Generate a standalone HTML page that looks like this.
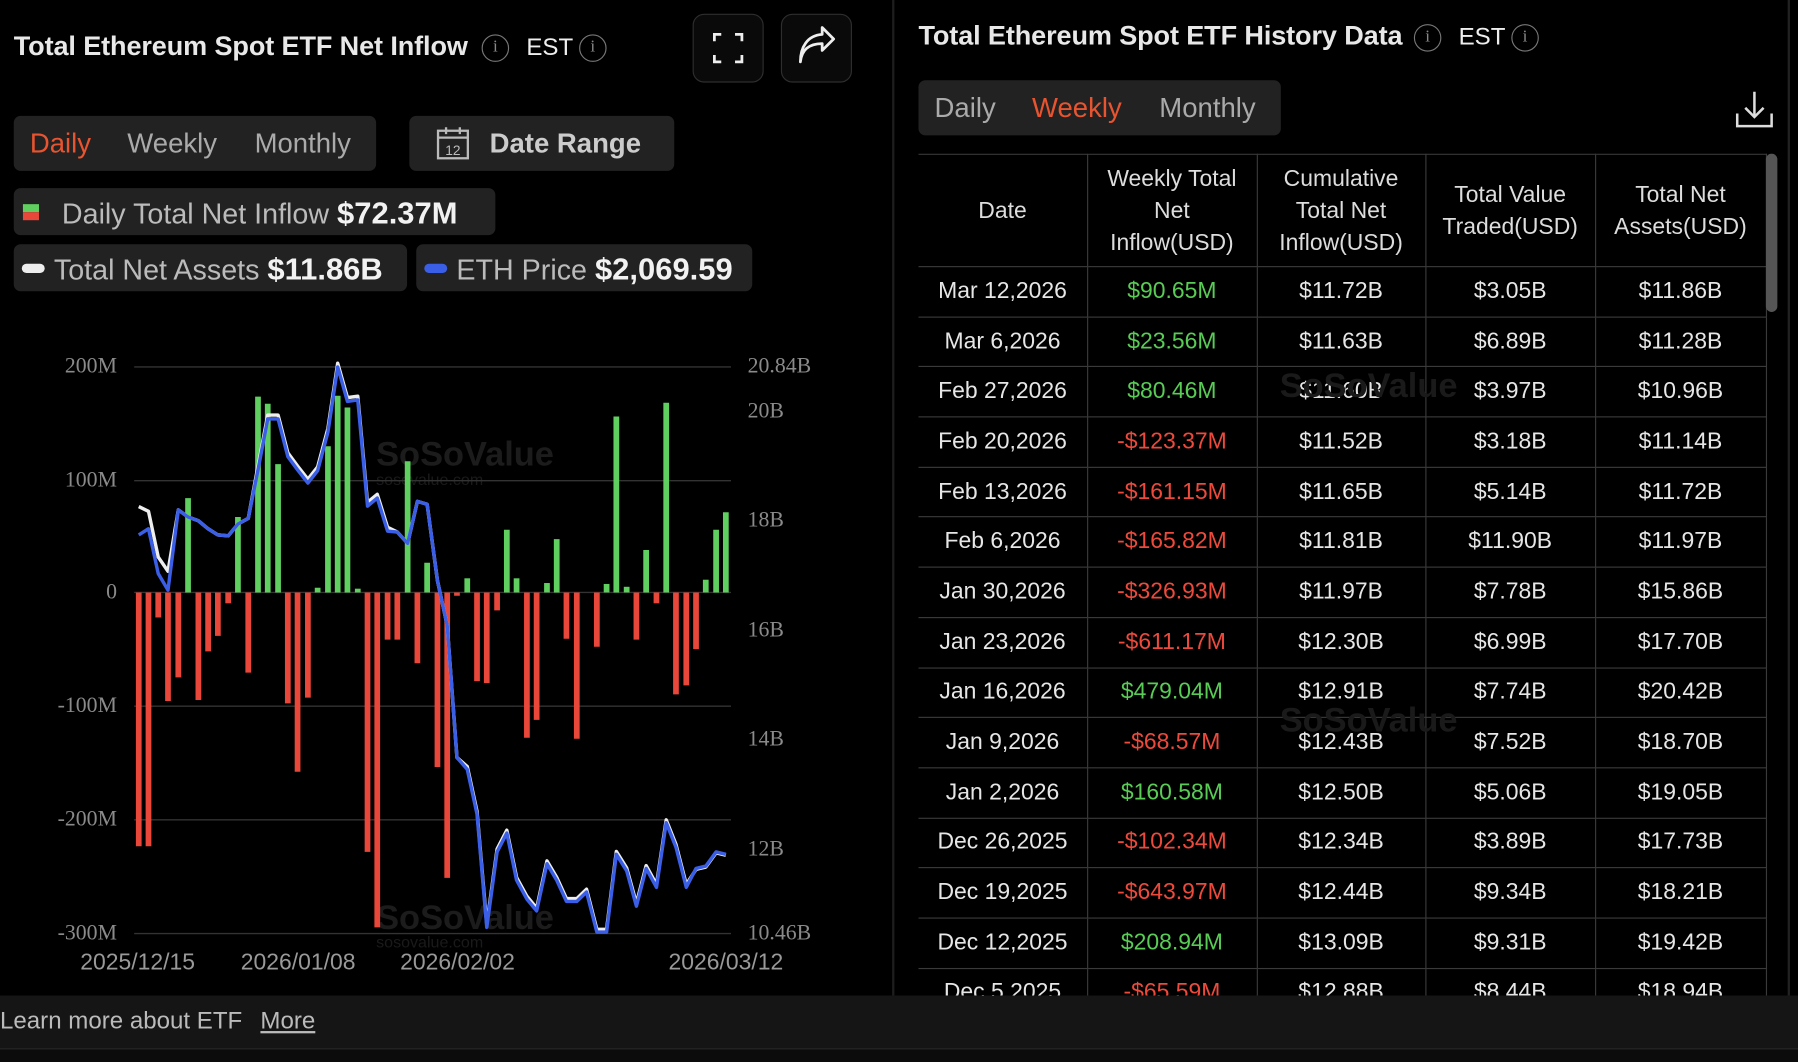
<!DOCTYPE html>
<html><head><meta charset="utf-8"><style>
*{margin:0;padding:0;box-sizing:border-box}
html,body{width:1798px;height:1062px;background:#000;overflow:hidden}
#w{position:absolute;left:0;top:0;width:1568px;height:926px;transform:scale(1.14668,1.14687);transform-origin:0 0;font-family:"Liberation Sans",sans-serif;color:#ddd}
.a{position:absolute;white-space:nowrap}
.t{font-weight:bold;font-size:23.6px;color:#e8e8e8;letter-spacing:-0.1px}
.info{position:absolute;width:24px;height:24px;border:1.5px solid #777;border-radius:50%;color:#888;font-size:15px;text-align:center;line-height:21px;font-family:"Liberation Serif",serif}
.box{position:absolute;background:#222;border-radius:6px}
.tab{position:absolute;font-size:24px;color:#aaa;top:50%;transform:translateY(-46%)}
.btn{position:absolute;border:1.5px solid #2e2e2e;border-radius:10px;background:#0a0a0a}
.yl{position:absolute;font-family:"Liberation Serif",serif;font-size:19px;color:#8a8a8a;transform:translateY(-50%)}
.xl{position:absolute;font-size:19px;color:#999;transform:translate(-50%,-50%)}
table{border-collapse:collapse;position:absolute;left:801px;top:134px;width:739px;font-size:20px;table-layout:fixed}
td,th{border:1.5px solid #3a3a3a;text-align:center;font-weight:normal;color:#e6e6e6;height:43.7px;padding:0}
th{height:98px;line-height:28px;color:#ddd}
td:first-child,th:first-child{border-left:none}
.g{color:#58cc55}.r{color:#ee4a3c}
.wm{position:absolute;font-weight:bold;font-size:30px;color:#1c1c1c}
.wms{position:absolute;font-size:14px;color:#1a1a1a}
.lg{font-size:25px}
.lg b{font-size:27px;color:#f2f2f2}
</style></head><body><div id="w">
<!-- left -->
<div class="a t" style="left:12px;top:28px">Total Ethereum Spot ETF Net Inflow</div>
<div class="info" style="left:420px;top:30px">i</div>
<div class="a" style="left:459px;top:30px;font-size:21px;color:#eee">EST</div>
<div class="info" style="left:505px;top:30px">i</div>
<div class="btn" style="left:604px;top:12px;width:62px;height:60px">
<svg width="62" height="60" style="position:absolute;left:-1px;top:-1px"><path d="M19 36v6h6M37 42h6v-6M43 24v-6h-6M25 18h-6v6" stroke="#eee" stroke-width="2.4" fill="none"/></svg></div>
<div class="btn" style="left:681px;top:12px;width:62px;height:60px">
<svg width="62" height="60" style="position:absolute;left:-1px;top:-1px"><path d="M17 42c1-10 7-16 19-16v6l10-10-10-10v6c-13 1-19 11-19 24z" stroke="#eee" stroke-width="2.4" fill="none" stroke-linejoin="round"/></svg></div>
<div class="box" style="left:12px;top:101px;width:316px;height:48px">
<span class="tab" style="left:14px;color:#e8542f">Daily</span><span class="tab" style="left:99px">Weekly</span><span class="tab" style="left:210px">Monthly</span></div>
<div class="box" style="left:357px;top:101px;width:231px;height:48px">
<svg width="30" height="30" style="position:absolute;left:23px;top:9px"><rect x="2" y="4" width="26" height="24" fill="none" stroke="#bbb" stroke-width="2"/><path d="M2 10h26M9 1v6M21 1v6" stroke="#bbb" stroke-width="2"/><text x="15" y="25" font-size="12" fill="#bbb" text-anchor="middle" font-family="Liberation Sans">12</text></svg>
<span class="tab" style="left:70px;font-weight:bold;color:#ccc">Date Range</span></div>
<div class="box" style="left:12px;top:164px;width:420px;height:41px">
<div class="a" style="left:8px;top:14px;width:14px;height:7px;background:#5fcf5f"></div><div class="a" style="left:8px;top:21px;width:14px;height:7px;background:#e8473a"></div>
<span class="tab lg" style="left:42px;color:#bbb">Daily Total Net Inflow <b>$72.37M</b></span></div>
<div class="box" style="left:12px;top:213px;width:343px;height:41px">
<div class="a" style="left:7px;top:17px;width:20px;height:8px;border-radius:4px;background:#eee"></div>
<span class="tab lg" style="left:35px;color:#bbb">Total Net Assets <b>$11.86B</b></span></div>
<div class="box" style="left:363px;top:213px;width:293px;height:41px">
<div class="a" style="left:7px;top:17px;width:20px;height:8px;border-radius:4px;background:#3a5fe6"></div>
<span class="tab lg" style="left:35px;color:#bbb">ETH Price <b>$2,069.59</b></span></div>
<!-- axes -->
<div class="yl" style="right:1466px;top:320px">200M</div>
<div class="yl" style="right:1466px;top:419px">100M</div>
<div class="yl" style="right:1466px;top:517px">0</div>
<div class="yl" style="right:1466px;top:616px">-100M</div>
<div class="yl" style="right:1466px;top:715px">-200M</div>
<div class="yl" style="right:1466px;top:814px">-300M</div>
<div class="yl" style="left:652px;top:320px">20.84B</div>
<div class="yl" style="left:652px;top:359px">20B</div>
<div class="yl" style="left:652px;top:454px">18B</div>
<div class="yl" style="left:652px;top:550px">16B</div>
<div class="yl" style="left:652px;top:645px">14B</div>
<div class="yl" style="left:652px;top:741px">12B</div>
<div class="yl" style="left:652px;top:814px">10.46B</div>
<div class="xl" style="left:120px;top:840px;font-size:20px">2025/12/15</div>
<div class="xl" style="left:260px;top:840px;font-size:20px">2026/01/08</div>
<div class="xl" style="left:399px;top:840px;font-size:20px">2026/02/02</div>
<div class="xl" style="left:633px;top:840px;font-size:20px">2026/03/12</div>
<div class="wm" style="left:328px;top:380px">SoSoValue</div><div class="wms" style="left:328px;top:410px">sosovalue.com</div>
<div class="wm" style="left:328px;top:784px">SoSoValue</div><div class="wms" style="left:328px;top:813px">sosovalue.com</div>
<svg style="position:absolute;left:0;top:278px" width="784" height="645" viewBox="0 0 1568 1568" preserveAspectRatio="none">
<g stroke="#333" stroke-width="1.2" vector-effect="non-scaling-stroke"><path vector-effect="non-scaling-stroke" d="M234 102H1275M234 343H1275M234 580H1275M234 821H1275M234 1062H1275M234 1303H1275"/></g>
<g id="bars" stroke-width="5.5"></g>
<polyline id="wl" fill="none" stroke="#eee" stroke-width="3" vector-effect="non-scaling-stroke" stroke-linejoin="round"/>
<polyline id="bl" fill="none" stroke="#3a5fe6" stroke-width="3" vector-effect="non-scaling-stroke" stroke-linejoin="round"/>
</svg>
<div class="a" style="left:778px;top:0;width:2px;height:868px;background:#1e1e1e"></div>
<!-- right -->
<div class="a t" style="left:801px;top:19px">Total Ethereum Spot ETF History Data</div>
<div class="info" style="left:1233px;top:21px">i</div>
<div class="a" style="left:1272px;top:21px;font-size:21px;color:#eee">EST</div>
<div class="info" style="left:1318px;top:21px">i</div>
<div class="box" style="left:801px;top:70px;width:316px;height:48px">
<span class="tab" style="left:14px">Daily</span><span class="tab" style="left:99px;color:#e8542f">Weekly</span><span class="tab" style="left:210px">Monthly</span></div>
<svg width="36" height="36" style="position:absolute;left:1512px;top:77px"><path d="M18 3v22M10 17l8 8 8-8M3 22v11h30V22" stroke="#ddd" stroke-width="2.2" fill="none"/></svg>
<div class="a" style="left:801px;top:134px;width:760px;height:734px;overflow:hidden">
<table style="left:0;top:0">
<colgroup><col style="width:147px"><col style="width:148px"><col style="width:147px"><col style="width:148px"><col style="width:149px"></colgroup>
<tr><th>Date</th><th>Weekly Total<br>Net<br>Inflow(USD)</th><th>Cumulative<br>Total Net<br>Inflow(USD)</th><th>Total Value<br>Traded(USD)</th><th>Total Net<br>Assets(USD)</th></tr>
<tr><td>Mar 12,2026</td><td class="g">$90.65M</td><td>$11.72B</td><td>$3.05B</td><td>$11.86B</td></tr>
<tr><td>Mar 6,2026</td><td class="g">$23.56M</td><td>$11.63B</td><td>$6.89B</td><td>$11.28B</td></tr>
<tr><td>Feb 27,2026</td><td class="g">$80.46M</td><td>$11.60B</td><td>$3.97B</td><td>$10.96B</td></tr>
<tr><td>Feb 20,2026</td><td class="r">-$123.37M</td><td>$11.52B</td><td>$3.18B</td><td>$11.14B</td></tr>
<tr><td>Feb 13,2026</td><td class="r">-$161.15M</td><td>$11.65B</td><td>$5.14B</td><td>$11.72B</td></tr>
<tr><td>Feb 6,2026</td><td class="r">-$165.82M</td><td>$11.81B</td><td>$11.90B</td><td>$11.97B</td></tr>
<tr><td>Jan 30,2026</td><td class="r">-$326.93M</td><td>$11.97B</td><td>$7.78B</td><td>$15.86B</td></tr>
<tr><td>Jan 23,2026</td><td class="r">-$611.17M</td><td>$12.30B</td><td>$6.99B</td><td>$17.70B</td></tr>
<tr><td>Jan 16,2026</td><td class="g">$479.04M</td><td>$12.91B</td><td>$7.74B</td><td>$20.42B</td></tr>
<tr><td>Jan 9,2026</td><td class="r">-$68.57M</td><td>$12.43B</td><td>$7.52B</td><td>$18.70B</td></tr>
<tr><td>Jan 2,2026</td><td class="g">$160.58M</td><td>$12.50B</td><td>$5.06B</td><td>$19.05B</td></tr>
<tr><td>Dec 26,2025</td><td class="r">-$102.34M</td><td>$12.34B</td><td>$3.89B</td><td>$17.73B</td></tr>
<tr><td>Dec 19,2025</td><td class="r">-$643.97M</td><td>$12.44B</td><td>$9.34B</td><td>$18.21B</td></tr>
<tr><td>Dec 12,2025</td><td class="g">$208.94M</td><td>$13.09B</td><td>$9.31B</td><td>$19.42B</td></tr>
<tr><td>Dec 5,2025</td><td class="r">-$65.59M</td><td>$12.88B</td><td>$8.44B</td><td>$18.94B</td></tr>
</table>
<div class="wm" style="left:315px;top:186px;color:#1a1a1a">SoSoValue</div>
<div class="wm" style="left:315px;top:478px;color:#1a1a1a">SoSoValue</div>
<div class="a" style="left:739px;top:0;width:10px;height:138px;border-radius:5px;background:#555"></div>
</div>
<div class="a" style="left:1559px;top:0;width:2px;height:868px;background:#222"></div>
<!-- footer -->
<div class="a" style="left:0;top:868px;width:1568px;height:46px;background:#151515"></div>
<div class="a" style="left:0;top:914px;width:1568px;height:12px;background:#0c0c0c;border-top:1px solid #2a2a2a"></div>
<div class="a" style="left:0;top:879px;font-size:21px;color:#bbb">Learn more about ETF <span style="margin-left:10px;text-decoration:underline">More</span></div>
</div>
<script>
var b=[[242,1118],[259,1118],[276,633],[293,810],[311,760],[328,380],[346,808],[363,705],[380,672],[398,603],[415,420],[433,750],[450,165],[467,180],[485,308],[502,815],[519,960],[537,803],[554,570],[572,270],[589,163],[606,188],[624,572],[641,1130],[658,1290],[676,680],[693,680],[711,302],[728,730],[745,517],[763,950],[780,1185],[797,587],[815,550],[832,768],[849,772],[867,618],[884,447],[901,550],[919,888],[936,850],[954,560],[971,467],[988,678],[1006,890],[1041,695],[1058,562],[1075,207],[1093,568],[1110,680],[1127,490],[1145,603],[1162,178],[1179,796],[1197,777],[1214,700],[1231,553],[1249,447],[1266,410]];
var g=document.getElementById('bars'),s='';
b.forEach(function(p){s+='<line x1="'+p[0]+'" x2="'+p[0]+'" y1="580" y2="'+p[1]+'" stroke="'+(p[1]<580?'#5fcf5f':'#e8473a')+'" stroke-width="5" vector-effect="non-scaling-stroke"/>';});
g.innerHTML=s;
var L=[[242,458],[259,445],[276,540],[293,575],[311,405],[328,420],[346,428],[363,445],[380,458],[398,460],[415,435],[433,423],[450,320],[467,212],[485,212],[502,292],[519,320],[537,348],[554,322],[572,240],[589,102],[606,175],[624,172],[641,397],[658,380],[676,450],[693,452],[711,476],[728,387],[745,393],[763,555],[780,650],[797,930],[815,955],[832,1050],[849,1290],[867,1130],[884,1090],[901,1190],[919,1230],[936,1255],[954,1155],[971,1190],[988,1235],[1006,1235],[1023,1215],[1041,1300],[1058,1300],[1075,1135],[1093,1170],[1110,1245],[1127,1165],[1145,1205],[1162,1068],[1179,1120],[1197,1205],[1214,1165],[1231,1160],[1249,1130],[1266,1135]];
var W=L.map(function(p,i){var y=p[1];if(i==0)y=398;if(i==1)y=408;if(i==2)y=505;if(i==3)y=535;if(i>=12&&i<=25)y-=8;if(i>=33)y-=6;if(i>=56)y+=8;return p[0]+','+y;}).join(' ');
document.getElementById('wl').setAttribute('points',W);
document.getElementById('bl').setAttribute('points',L.map(function(p){return p.join(',')}).join(' '));
</script>
</body></html>
